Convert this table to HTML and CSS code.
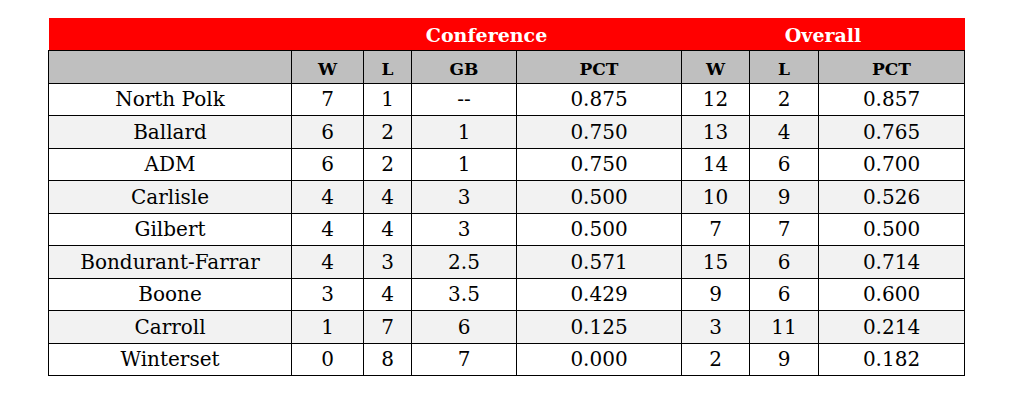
FILE: index.html
```html
<!DOCTYPE html>
<html>
<head>
<meta charset="utf-8">
<link rel="stylesheet" href="styles.css">
</head>
<body>
<table class="standings">
  <colgroup>
    <col class="c-team"><col class="c-w"><col class="c-l"><col class="c-gb"><col class="c-pct"><col class="c-ow"><col class="c-ol"><col class="c-opct">
  </colgroup>
  <thead>
    <tr class="groups">
      <th></th>
      <th colspan="4">Conference</th>
      <th colspan="3">Overall</th>
    </tr>
    <tr class="labels">
      <th></th><th>W</th><th>L</th><th>GB</th><th>PCT</th><th>W</th><th>L</th><th>PCT</th>
    </tr>
  </thead>
  <tbody>
    <tr><td>North Polk</td><td>7</td><td>1</td><td>--</td><td>0.875</td><td>12</td><td>2</td><td>0.857</td></tr>
    <tr><td>Ballard</td><td>6</td><td>2</td><td>1</td><td>0.750</td><td>13</td><td>4</td><td>0.765</td></tr>
    <tr><td>ADM</td><td>6</td><td>2</td><td>1</td><td>0.750</td><td>14</td><td>6</td><td>0.700</td></tr>
    <tr><td>Carlisle</td><td>4</td><td>4</td><td>3</td><td>0.500</td><td>10</td><td>9</td><td>0.526</td></tr>
    <tr><td>Gilbert</td><td>4</td><td>4</td><td>3</td><td>0.500</td><td>7</td><td>7</td><td>0.500</td></tr>
    <tr><td>Bondurant-Farrar</td><td>4</td><td>3</td><td>2.5</td><td>0.571</td><td>15</td><td>6</td><td>0.714</td></tr>
    <tr><td>Boone</td><td>3</td><td>4</td><td>3.5</td><td>0.429</td><td>9</td><td>6</td><td>0.600</td></tr>
    <tr><td>Carroll</td><td>1</td><td>7</td><td>6</td><td>0.125</td><td>3</td><td>11</td><td>0.214</td></tr>
    <tr><td>Winterset</td><td>0</td><td>8</td><td>7</td><td>0.000</td><td>2</td><td>9</td><td>0.182</td></tr>
  </tbody>
</table>
</body>
</html>
```
FILE: styles.css
```css
html, body {
  margin: 0;
  padding: 0;
  background: #ffffff;
}
body {
  padding: 18px 0 0 48px;
  font-family: "DejaVu Serif", "Liberation Serif", serif;
}
.standings {
  border-collapse: collapse;
  table-layout: fixed;
  width: 916px;
  color: #000;
}
.c-team { width: 243px; }
.c-w { width: 72px; }
.c-l { width: 48px; }
.c-gb { width: 105px; }
.c-pct { width: 165px; }
.c-ow { width: 68px; }
.c-ol { width: 69px; }
.c-opct { width: 146px; }
.standings th, .standings td {
  padding: 0;
  text-align: center;
  vertical-align: middle;
}
.groups th {
  background: #ff0000;
  color: #ffffff;
  font-size: 19px;
  font-weight: bold;
  height: 32px;
  padding-top: 3px;
  box-sizing: border-box;
  border: none;
}
.labels th {
  background: #bfbfbf;
  font-size: 17px;
  font-weight: bold;
  height: 33px;
  padding-top: 5px;
  box-sizing: border-box;
  border: 1px solid #000;
}
.standings td {
  font-size: 20px;
  height: 31.5px;
  border: 1px solid #000;
}
.standings tbody tr:nth-child(even) td {
  background: #f2f2f2;
}
```
